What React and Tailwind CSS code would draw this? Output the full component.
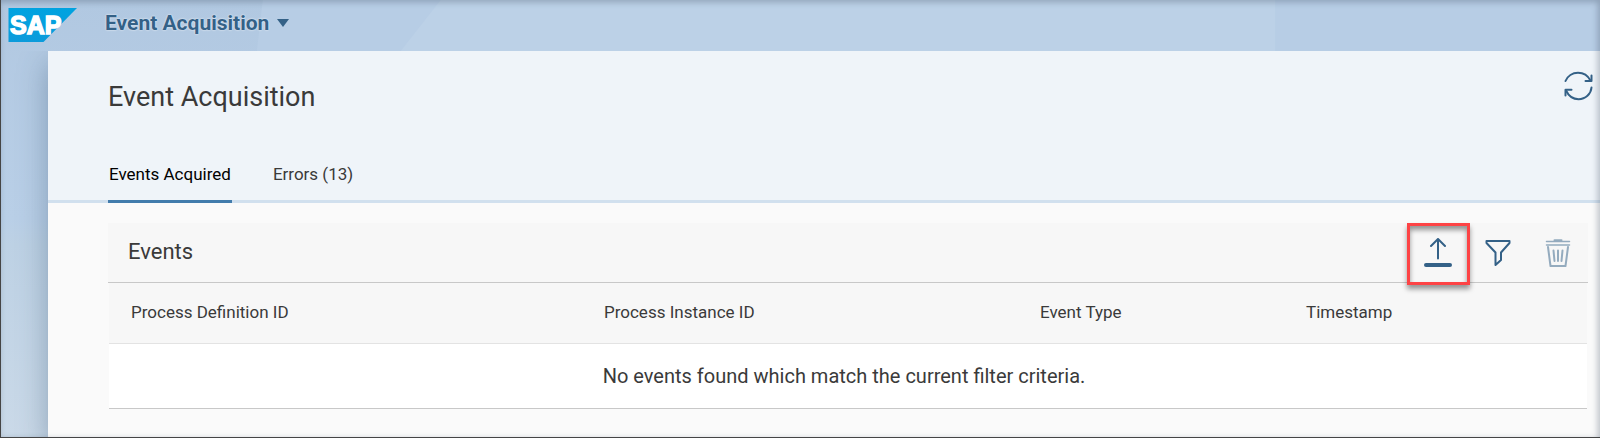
import React from "react";

function SapLogo() {
  return (
    <svg width="69" height="34" viewBox="0 0 69 34" role="img" aria-label="SAP">
      <defs>
        <linearGradient id="sap-blue" x1="0" y1="0" x2="0" y2="1">
          <stop offset="0" stopColor="#00a3e0" />
          <stop offset="1" stopColor="#0b9bdb" />
        </linearGradient>
      </defs>
      <path d="M0.5 0H69L35.5 34H0.5Z" fill="url(#sap-blue)" />
      <text
        x="2"
        y="26"
        fontFamily="'Liberation Sans', Arial, sans-serif"
        fontWeight="700"
        fontSize="25"
        fill="#fff"
        stroke="#fff"
        strokeWidth="1.5"
      >
        SAP
      </text>
    </svg>
  );
}

function Backdrop() {
  return (
    <svg
      aria-hidden="true"
      className="absolute inset-0 -z-10 h-full w-full"
      viewBox="0 0 1600 438"
      preserveAspectRatio="none"
    >
      <defs>
        <linearGradient id="sky" x1="0" y1="0" x2="0" y2="1">
          <stop offset="0" stopColor="#b1c8e1" />
          <stop offset="0.5" stopColor="#b9cfe7" />
          <stop offset="0.56" stopColor="#bdd1e4" />
          <stop offset="1" stopColor="#cad9e8" />
        </linearGradient>
      </defs>
      <rect width="1600" height="438" fill="url(#sky)" />
      <path d="M262 0H1600V51H256Z" fill="#b7cde5" />
      <path d="M440 0H1275V51H400Z" fill="#bcd1e7" />
    </svg>
  );
}

const stroke = {
  fill: "none",
  stroke: "currentColor",
  strokeWidth: 2,
  strokeLinecap: "round",
  strokeLinejoin: "round",
};

function RefreshIcon() {
  return (
    <svg width="30" height="30" viewBox="0 0 30 30" aria-hidden="true" {...stroke}>
      <path d="M1.5 10C3.5 5 8.5 1.7 14 1.7c5.5 0 10 3 12.5 7.8" />
      <path d="M27.5 4.5V10H21.5" />
      <path d="M27.5 16.5C27 23 21.5 28.2 14.5 28.2c-5.5 0-10-3.5-12.5-8.7" />
      <path d="M1.5 24.5V18.7H7.5" />
    </svg>
  );
}

function UploadIcon() {
  return (
    <svg width="30" height="30" viewBox="0 0 30 30" aria-hidden="true" {...stroke}>
      <path d="M15 20.5V1.5M8 8L15 1L22 8" />
      <path d="M3 27H27" strokeWidth="4" />
    </svg>
  );
}

function FilterIcon() {
  return (
    <svg width="30" height="30" viewBox="0 0 30 30" aria-hidden="true" {...stroke}>
      <path d="M3.5 3H26.5V5L18 14.5V22L12.5 27V14.5L3.5 5Z" />
    </svg>
  );
}

function TrashIcon() {
  return (
    <svg width="30" height="30" viewBox="0 0 30 30" aria-hidden="true" {...stroke}>
      <path d="M3.5 3.5H26.5M3.5 7H26.5" strokeWidth="1.5" />
      <path d="M11.5 2.2H18.5" />
      <path d="M5 9L7.5 28H22.5L25 9" />
      <path d="M10.5 12.5L11.5 23M15 12.5V23M19.5 12.5L18.5 23" />
    </svg>
  );
}

const tools = [
  { label: "Upload", Icon: UploadIcon, highlighted: true },
  { label: "Filter", Icon: FilterIcon },
  { label: "Delete", Icon: TrashIcon, disabled: true },
];

const columns = [
  { title: "Process Definition ID", width: "w-[32%]" },
  { title: "Process Instance ID", width: "w-[29.5%]" },
  { title: "Event Type", width: "w-[18%]" },
  { title: "Timestamp", width: "w-[20.5%]" },
];

export default function App() {
  return (
    <div className="relative isolate flex min-h-screen flex-col border-b border-l border-[#454545] font-['Roboto','Noto_Sans',sans-serif] text-[#3a3a3a]">
      <Backdrop />
      <header className="flex h-[51px] items-center gap-7 pb-[5px] pl-[7px]">
        <a href="#home" className="pt-1">
          <SapLogo />
        </a>
        <button className="flex items-center gap-2 text-[21px] leading-6 font-bold text-[#346187] [text-shadow:0_0_2px_#fff]">
          Event Acquisition
          <svg width="12" height="8" viewBox="0 0 12 8" aria-hidden="true">
            <path d="M0 0H12L6 8Z" fill="currentColor" />
          </svg>
        </button>
      </header>

      <main className="ml-[47px] flex flex-1 flex-col bg-[#fafafa] shadow-[0_12px_28px_rgba(50,80,110,0.4)] [clip-path:inset(0_0_0_-47px)]">
        <div className="border-b-[3px] border-[#d1e0ee] bg-[#eff4f9]">
          <div className="flex h-[98px] items-start justify-between pt-5 pr-1.5 pl-[60px]">
            <h1 className="pt-1.5 text-[27px] leading-10">Event Acquisition</h1>
            <button aria-label="Refresh" className="text-[#346187]">
              <RefreshIcon />
            </button>
          </div>
          <div role="tablist" className="-mb-[3px] flex gap-10 pl-[60px] text-[17px]">
            <button
              role="tab"
              aria-selected="true"
              className="h-[54px] border-b-[3px] border-[#427cac] px-px text-black"
            >
              Events Acquired
            </button>
            <button role="tab" aria-selected="false" className="h-[54px] border-b-[3px] border-transparent px-px">
              Errors (13)
            </button>
          </div>
        </div>

        <section className="mt-5 mr-3 ml-[60px]">
          <div className="flex h-[60px] items-center justify-between border-b border-[#c8c8c8] bg-[#f7f7f7] pl-5">
            <h2 className="pb-0.5 text-[22px] leading-8">Events</h2>
            <div className="flex text-[#346187]">
              {tools.map(({ label, Icon, highlighted, disabled }) => (
                <button
                  key={label}
                  aria-label={label}
                  disabled={disabled}
                  className="relative flex size-[60px] items-center justify-center disabled:opacity-50"
                >
                  <Icon />
                  {highlighted && (
                    <span className="absolute top-0 -right-0.5 -bottom-0.5 -left-px border-[3px] border-[#fd4345] shadow-[0_4px_5px_rgba(0,0,0,0.4),inset_0_4px_5px_rgba(0,0,0,0.4)]" />
                  )}
                </button>
              ))}
            </div>
          </div>
          <div className="px-px">
            <table className="w-full table-fixed border-b border-[#c8c8c8] bg-white text-left">
              <thead className="bg-[#f7f7f7] text-[17px]">
                <tr className="h-[60px] border-b border-[#e3e3e3]">
                  {columns.map(({ title, width }) => (
                    <th key={title} className={`${width} pl-[22px] font-normal`}>
                      {title}
                    </th>
                  ))}
                </tr>
              </thead>
              <tbody>
                <tr className="h-[65px] text-center text-[20px]">
                  <td colSpan={4} className="pr-2">
                    No events found which match the current filter criteria.
                  </td>
                </tr>
              </tbody>
            </table>
          </div>
        </section>
      </main>
      <div
        aria-hidden="true"
        className="pointer-events-none absolute inset-0 shadow-[inset_-2px_2px_6px_rgba(60,75,95,0.35)]"
      />
    </div>
  );
}
